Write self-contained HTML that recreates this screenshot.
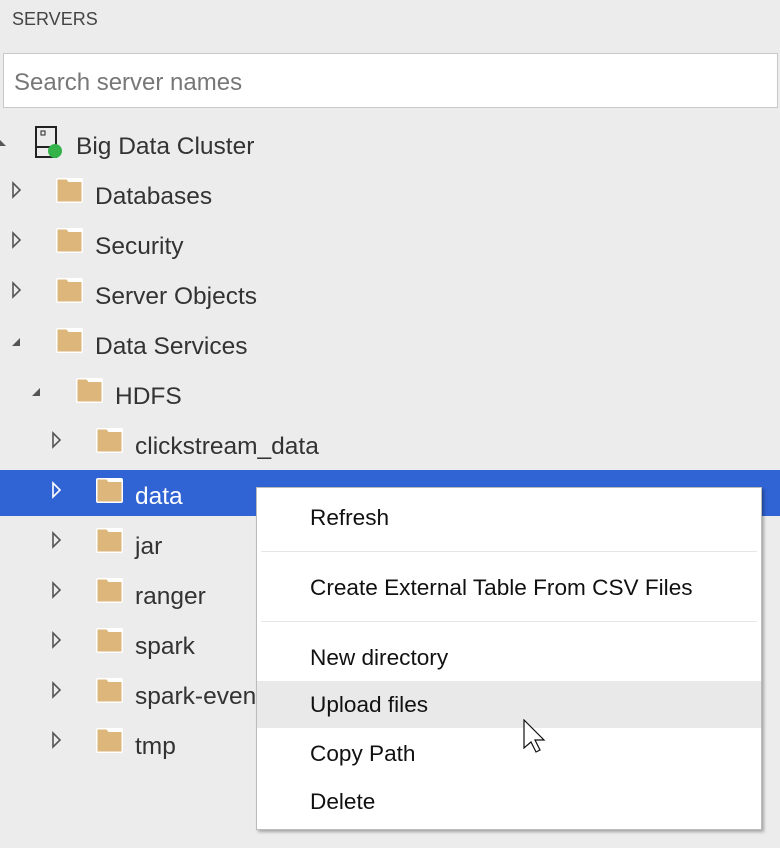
<!DOCTYPE html>
<html><head><style>
body{margin:0;width:780px;height:848px;background:#ececec;font-family:"Liberation Sans",sans-serif;position:relative;overflow:hidden;color:#333}
.t{position:absolute;font-size:24.5px;line-height:30px;white-space:nowrap;margin-top:2px}
.mi{position:absolute;left:310px;font-size:22.6px;color:#111;line-height:30px;white-space:nowrap}
</style></head><body>
<div class="t" style="left:12px;top:2px;font-size:18px;color:#444">SERVERS</div>
<div style="position:absolute;left:3px;top:53px;width:773px;height:53px;background:#fff;border:1px solid #c8c8c8"></div>
<div class="t" style="left:14px;top:66px;color:#777;font-size:24px">Search server names</div>
<div style="position:absolute;left:0;top:470px;width:780px;height:46px;background:#3063d4"></div>
<svg width="780" height="848" style="position:absolute;left:0;top:0">
<defs>
<g id="f"><rect x="0" y="0" width="27" height="25" fill="#fff" rx="2"/><path d="M1.5 1.5h9l2 2.5h13v19.5H1.5z" fill="#dcb67a"/></g>
<path id="r" d="M0 0l7 7-7 7z" fill="none" stroke="#555" stroke-width="1.6"/>
</defs>
<path d="M0 140l6 6h-6z" fill="#555"/>
<rect x="36" y="127" width="20" height="30" fill="none" stroke="#222" stroke-width="2"/>
<line x1="36" y1="147" x2="56" y2="147" stroke="#222" stroke-width="2"/>
<rect x="41" y="131" width="4" height="4" fill="none" stroke="#222"/>
<circle cx="55" cy="151" r="7" fill="#33b34a"/>
<use href="#r" x="13" y="183"/><use href="#f" x="56" y="178"/>
<use href="#r" x="13" y="233"/><use href="#f" x="56" y="228"/>
<use href="#r" x="13" y="283"/><use href="#f" x="56" y="278"/>
<path d="M12 346l8-8v8z" fill="#555"/><use href="#f" x="56" y="328"/>
<path d="M32 396l8-8v8z" fill="#555"/><use href="#f" x="76" y="378"/>
<use href="#r" x="53" y="433"/><use href="#f" x="96" y="428"/>
<path d="M53 483l7 7-7 7z" fill="none" stroke="#fff" stroke-width="1.6"/><use href="#f" x="96" y="478"/>
<use href="#r" x="53" y="533"/><use href="#f" x="96" y="528"/>
<use href="#r" x="53" y="583"/><use href="#f" x="96" y="578"/>
<use href="#r" x="53" y="633"/><use href="#f" x="96" y="628"/>
<use href="#r" x="53" y="683"/><use href="#f" x="96" y="678"/>
<use href="#r" x="53" y="733"/><use href="#f" x="96" y="728"/>
</svg>
<div class="t" style="left:76px;top:130px">Big Data Cluster</div>
<div class="t" style="left:95px;top:180px">Databases</div>
<div class="t" style="left:95px;top:230px">Security</div>
<div class="t" style="left:95px;top:280px">Server Objects</div>
<div class="t" style="left:95px;top:330px">Data Services</div>
<div class="t" style="left:115px;top:380px">HDFS</div>
<div class="t" style="left:135px;top:430px">clickstream_data</div>
<div class="t" style="left:135px;top:480px;color:#fff">data</div>
<div class="t" style="left:135px;top:530px">jar</div>
<div class="t" style="left:135px;top:580px">ranger</div>
<div class="t" style="left:135px;top:630px">spark</div>
<div class="t" style="left:135px;top:680px">spark-events</div>
<div class="t" style="left:135px;top:730px">tmp</div>
<div style="position:absolute;left:256px;top:487px;width:504px;height:341px;background:#fff;border:1px solid #bbb;box-shadow:2px 2px 3px rgba(0,0,0,.3)">
<div style="position:absolute;left:4px;right:4px;top:63px;height:1px;background:#e6e6e6"></div>
<div style="position:absolute;left:4px;right:4px;top:133px;height:1px;background:#e6e6e6"></div>
<div style="position:absolute;left:0;right:0;top:193px;height:47px;background:#e9e9e9"></div>
</div>
<div class="mi" style="top:503px">Refresh</div>
<div class="mi" style="top:573px">Create External Table From CSV Files</div>
<div class="mi" style="top:643px">New directory</div>
<div class="mi" style="top:690px">Upload files</div>
<div class="mi" style="top:739px">Copy Path</div>
<div class="mi" style="top:787px">Delete</div>
<svg width="30" height="40" style="position:absolute;left:523px;top:719px"><path d="M1 1v28l7-6 5 10 4-2-5-10h9z" fill="#fff" stroke="#111" stroke-width="1.2"/></svg>
</body></html>
